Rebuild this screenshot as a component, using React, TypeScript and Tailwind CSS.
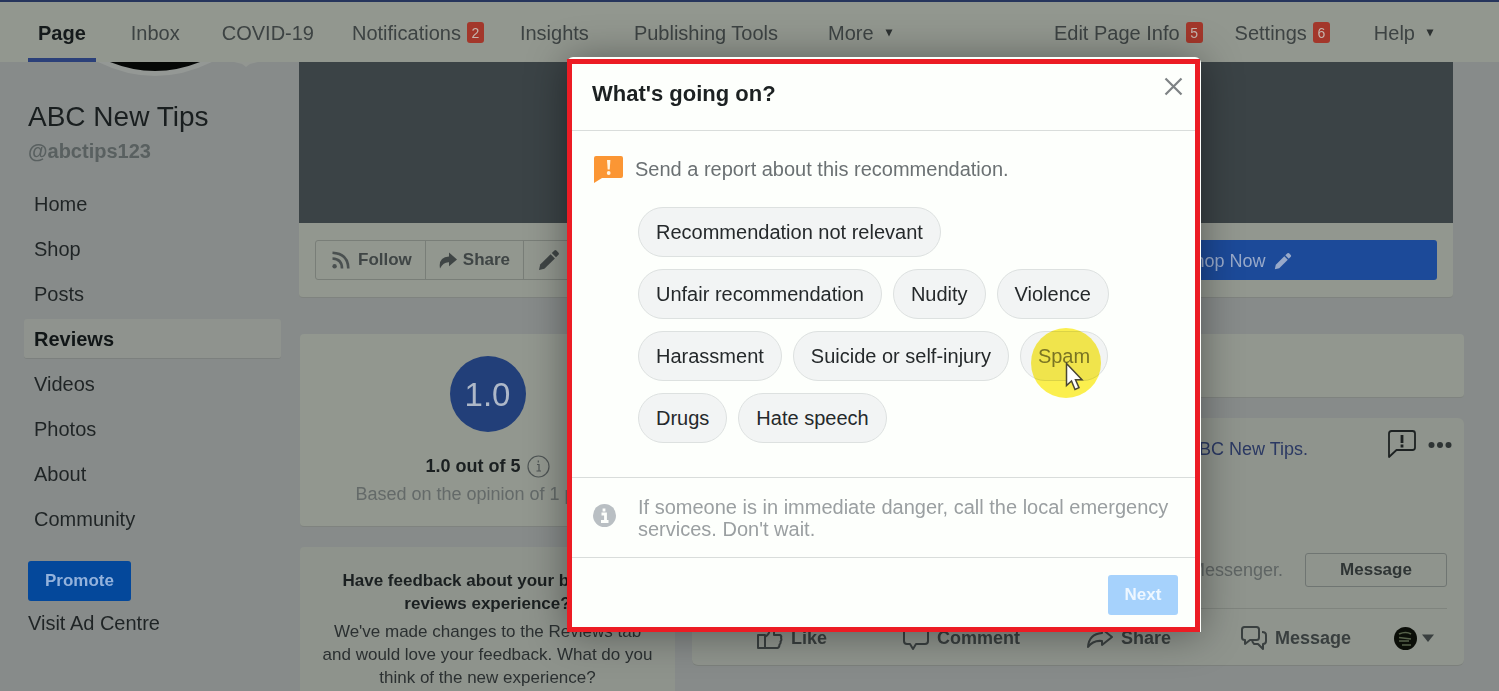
import React from "react";

const font = "font-['Liberation_Sans',Arial,sans-serif]";

function Badge({ children }: { children: React.ReactNode }) {
  return (
    <span className="ml-1.5 flex h-[21px] w-[17px] items-center justify-center rounded-[3px] bg-[#a3372b] text-sm text-[#c4b5ae]">
      {children}
    </span>
  );
}

function Caret() {
  return (
    <svg className="ml-[11px]" width="8" height="8" viewBox="0 0 8 8" aria-hidden="true">
      <path d="M0.5 0.5h7L4 7.5z" fill="#2c3131" />
    </svg>
  );
}

function NavLink({ label, badge, caret, className }: { label: string; badge?: string; caret?: boolean; className: string }) {
  return (
    <a href="#" className={`flex items-center pt-px ${className}`}>
      {label}
      {badge && <Badge>{badge}</Badge>}
      {caret && <Caret />}
    </a>
  );
}

function TopNav() {
  return (
    <header className="flex h-[62px] shrink-0 justify-between border-t-2 border-[#26355c] bg-[#92978f] pr-[65px] pl-7 text-xl whitespace-nowrap text-[#3d4343]">
      <nav className="flex">
        <a href="#" className="flex items-center border-b-4 border-[#2b4079] px-2.5 pt-[5px] font-bold text-[#151a1b]">
          Page
        </a>
        <NavLink label="Inbox" className="ml-[35px]" />
        <NavLink label="COVID-19" className="ml-[42px]" />
        <NavLink label="Notifications" badge="2" className="ml-[38px]" />
        <NavLink label="Insights" className="ml-9" />
        <NavLink label="Publishing Tools" className="ml-[45px]" />
        <NavLink label="More" caret className="ml-[50px]" />
      </nav>
      <nav className="flex">
        <NavLink label="Edit Page Info" badge="5" className="" />
        <NavLink label="Settings" badge="6" className="ml-8" />
        <NavLink label="Help" caret className="ml-11" />
      </nav>
    </header>
  );
}

const pages = ["Home", "Shop", "Posts", "Reviews", "Videos", "Photos", "About", "Community"];

function Sidebar() {
  return (
    <aside className="w-[299px] shrink-0 text-xl text-[#1f2425]">
      <svg className="ml-[95px] block" width="180" height="16" viewBox="0 0 180 16" aria-hidden="true">
        <path d="M3 0Q60 28 117 0z" fill="#949895" />
        <path d="M15 0Q60 18 105 0z" fill="#050706" />
        <path d="M139 0h24l-8 2-4 3-4-3z" fill="#929691" />
      </svg>
      <div className="px-7 pt-5">
        <h1 className="text-[28px] leading-[38px] text-[#191e1f]">ABC New Tips</h1>
        <p className="leading-[30px] font-bold text-[#596060]">@abctips123</p>
      </div>
      <nav className="mt-[18px] mr-[18px] ml-6 flex flex-col gap-[5px]">
        {pages.map((p) => (
          <a
            key={p}
            href="#"
            className={
              p === "Reviews"
                ? "flex h-10 items-center rounded-[3px] border-b border-[#7c807e] bg-[#8f938e] px-2.5 font-bold text-[#111617]"
                : "flex h-10 items-center px-2.5"
            }
          >
            {p}
          </a>
        ))}
      </nav>
      <div className="mt-[22px] flex flex-col items-start pl-7">
        <button type="button" className="h-10 rounded-[3px] bg-[#04489b] px-[17px] text-[17px] font-bold text-[#93b2dc]">
          Promote
        </button>
        <a href="#" className="mt-2 leading-7">
          Visit Ad Centre
        </a>
      </div>
    </aside>
  );
}

function Pencil({ className, size }: { className: string; size: number }) {
  return (
    <svg className={className} width={size} height={size} viewBox="0 0 22 22" fill="currentColor" aria-hidden="true">
      <path d="M1 21l1.2-5.4L12.600 5.200l4.300 4.300L6.400 19.800z" />
      <path d="M13.800 4l2.600-2.500q1-.8 2 .1l2.100 2.100q.9 1 0 2L18 8.300z" />
    </svg>
  );
}

function CoverCard() {
  const cell = "flex items-center border-r border-[#797e78] px-[13px]";
  return (
    <section className="mr-[11px] rounded-b border-b border-[#7f837f] bg-[#92978f]">
      <div className="h-[161px] bg-[#3b4346]" />
      <div className="flex h-[74px] items-center justify-between px-4">
        <div className="flex h-10 rounded-[3px] border border-[#797e78] text-[17px] font-bold text-[#3f4545]">
          <button type="button" className={cell}>
            <svg className="mr-2 ml-[3px]" width="18" height="18" viewBox="0 0 18 18" fill="none" stroke="#4a5050" strokeWidth="2.6" aria-hidden="true">
              <circle cx="2.600" cy="15.200" r="2.200" fill="#4a5050" stroke="none" />
              <path d="M0.500 7.500q9.500.5 9.500 10M.5 1.700q15.500.8 15.800 15.800" />
            </svg>
            Follow
          </button>
          <button type="button" className={cell}>
            <svg className="mr-[6px]" width="18" height="17" viewBox="0 0 18 17" fill="#3f4545" aria-hidden="true">
              <path d="M10 0.500L18 7.500l-8 6.800v-4.100Q4.500 9.800 1 16.500-1 5.500 10 4.600z" />
            </svg>
            Share
          </button>
          <button type="button" className="flex items-center px-[14px]">
            <Pencil className="mr-2" size={22} />
            Suggest Edits
          </button>
        </div>
        <button type="button" className="flex h-10 w-[400px] items-center justify-center rounded-[3px] bg-[#1c4a99] pt-0.5 text-lg text-[#98a9c9]">
          Shop Now
          <Pencil className="ml-2" size={18} />
        </button>
      </div>
    </section>
  );
}

function RatingColumn() {
  return (
    <div className="flex w-[375px] shrink-0 flex-col gap-5">
      <section className="flex h-[193px] flex-col items-center rounded border-b border-[#7f837f] bg-[#92978f] pt-[22px]">
        <div className="flex size-[76px] items-center justify-center rounded-full bg-[#223f79] pt-0.5 text-[33px] text-[#aeb8c8]">1.0</div>
        <p className="mt-5 flex items-center text-lg leading-7 font-bold text-[#1b2021]">
          1.0 out of 5
          <svg className="ml-1.5" width="23" height="23" viewBox="0 0 23 23" fill="none" stroke="#4f5555" strokeWidth="1.200" aria-hidden="true">
            <circle cx="11.500" cy="11.500" r="10.500" />
            <path d="M10 9.500h2v6.500M9.500 16h4.500M11.300 5.500v2" />
          </svg>
        </p>
        <p className="text-lg leading-7 text-[#646a69]">Based on the opinion of 1 person</p>
      </section>
      <section className="h-[260px] rounded bg-[#8e938c] px-5 pt-[22px] text-center text-[17px] text-[#2b3031]">
        <h2 className="leading-[23px] font-bold text-[#1b2021]">
          Have feedback about your business
          <br />
          reviews experience?
        </h2>
        <p className="mt-[5px] leading-[23px]">
          We've made changes to the Reviews tab
          <br />
          and would love your feedback. What do you
          <br />
          think of the new experience?
        </p>
      </section>
    </div>
  );
}

const line = { fill: "none", stroke: "#3a4040", strokeWidth: 2, strokeLinejoin: "round" as const };

function PostCard() {
  return (
    <section className="flex h-[248px] flex-col rounded-md border-b border-[#7c807c] bg-[#8f948d] px-[17px]">
      <div className="flex h-[62px] shrink-0 items-center justify-end text-lg text-[#2b3963]">
        <span>doesn't recommend ABC New Tips.</span>
        <button type="button" aria-label="Report" className="mb-2.5 ml-20">
          <svg width="28" height="28" viewBox="0 0 28 28" fill="none" stroke="#1d2222" strokeWidth="1.800" aria-hidden="true">
            <path d="M3.500 1h21Q27 1 27 3.500v14Q27 20 24.500 20H8.500L1 27V3.500Q1 1 3.500 1z" strokeLinejoin="round" />
            <path d="M14 5v8M14 14.500v3" strokeWidth="2.800" />
          </svg>
        </button>
        <button type="button" aria-label="More options" className="mr-[-5px] mb-2 ml-3">
          <svg width="24" height="8" viewBox="0 0 24 8" fill="#2e3434" aria-hidden="true">
            <circle cx="3.500" cy="4" r="3" />
            <circle cx="12" cy="4" r="3" />
            <circle cx="20.500" cy="4" r="3" />
          </svg>
        </button>
      </div>
      <div className="mt-[73px] flex items-center justify-end gap-[22px] border-b border-[#7f847e] pb-[21px] text-lg text-[#5f6564]">
        <span>Messenger.</span>
        <button type="button" className="h-[34px] w-[142px] rounded-[3px] border border-[#6f7572] text-[17px] font-bold text-[#2f3535]">
          Message
        </button>
      </div>
      <div className="flex h-[57px] items-center pt-0.5 pl-12 text-lg font-bold text-[#393f3f]">
        <button type="button" className="flex items-center gap-2">
          <svg width="26" height="24" viewBox="0 0 26 24" {...line} aria-hidden="true">
            <path d="M1 9h7v13H1zM8 11q5-3 5-9 4-1 4 3v4h6q2 1 1 3 1 2-.5 3.500.5 2-1 3 0 3-2 3.500H8" />
          </svg>
          Like
        </button>
        <button type="button" className="ml-[76px] flex items-center gap-2">
          <svg width="26" height="24" viewBox="0 0 26 24" {...line} aria-hidden="true">
            <path d="M4 2h18q3 0 3 3v10q0 3-3 3h-9l-3 5-3-5H4q-3 0-3-3V5q0-3 3-3z" />
          </svg>
          Comment
        </button>
        <button type="button" className="ml-[67px] flex items-center gap-2">
          <svg width="26" height="22" viewBox="0 0 26 22" {...line} aria-hidden="true">
            <path d="M15 2l10 8-10 8v-4Q6 13 1 20 2 7 15 6z" />
          </svg>
          Share
        </button>
        <button type="button" className="ml-[70px] flex items-center gap-2">
          <svg width="26" height="24" viewBox="0 0 26 24" {...line} aria-hidden="true">
            <path d="M3.500 1h12Q18 1 18 3.500v8Q18 14 15.500 14H9l-5 4v-4Q1 14 1 11.500v-8Q1 1 3.500 1z" />
            <path d="M21 6q4 0 4 3v6q0 3-3 3v5l-5-5h-4l-2-3" />
          </svg>
          Message
        </button>
        <button type="button" aria-label="Choose profile" className="ml-[43px] flex items-center gap-[5px]">
          <svg width="23" height="23" viewBox="0 0 23 23" aria-hidden="true">
            <circle cx="11.500" cy="11.500" r="11.500" fill="#0b0e08" />
            <path d="M5 7q7-3 12 0M5 10.500l12 1.500M5 14h10M8 18h9" stroke="#566149" strokeWidth="1.700" fill="none" />
          </svg>
          <svg width="12" height="8" viewBox="0 0 12 8" aria-hidden="true">
            <path d="M0 .5h12L6 8z" fill="#3a4040" />
          </svg>
        </button>
      </div>
    </section>
  );
}

function Spotlight() {
  return (
    <>
      <span className="pointer-events-none absolute top-[-4px] left-2.5 size-[70px] rounded-full bg-[#fdee3c] opacity-90 mix-blend-multiply" />
      <svg className="pointer-events-none absolute top-[30px] left-11" width="20" height="30" viewBox="0 0 20 30" aria-hidden="true">
        <path d="M1.500 1.500v22l5-4.500 3.500 8.500 4-1.800-3.500-8h6.500z" fill="#fff" stroke="#4a4632" strokeWidth="1.500" />
      </svg>
    </>
  );
}

const reasons = [
  "Recommendation not relevant",
  "Unfair recommendation",
  "Nudity",
  "Violence",
  "Harassment",
  "Suicide or self-injury",
  "Spam",
  "Drugs",
  "Hate speech",
];

function ReportDialog() {
  return (
    <div className="absolute inset-0 flex items-start justify-center pt-[57px] pl-[269px]">
      <div
        role="dialog"
        aria-labelledby="report-title"
        className="w-[634px] rounded-t-md bg-[#fdfffc] pt-0.5 pr-px shadow-[0_2px_40px_rgba(0,0,0,0.4)]"
      >
        <div className="border-[5px] border-[#ec1c24]">
          <div className="flex h-[67px] items-start justify-between border-b border-[#d9dddb] pr-3 pl-5">
            <h2 id="report-title" className="pt-[15px] text-[22px] leading-[30px] font-bold text-[#1c2122]">
              What's going on?
            </h2>
            <button type="button" aria-label="Close" className="mt-[13px]">
              <svg width="19" height="19" viewBox="0 0 19 19" stroke="#7d8284" strokeWidth="2.200" aria-hidden="true">
                <path d="M1.500 1.500l16 16M17.500 1.500l-16 16" />
              </svg>
            </button>
          </div>
          <div className="h-[347px] border-b border-[#d9dddb] pt-6 pl-[22px]">
            <div className="flex h-7 items-center gap-3 text-xl text-[#6b7173]">
              <svg width="29" height="28" viewBox="0 0 29 28" aria-hidden="true">
                <path d="M2 1h25q2 0 2 2v18q0 2-2 2H8l-8 5V3q0-2 2-2z" fill="#fb9634" />
                <path d="M13 5h3.400l-.7 9.500h-2z" fill="#fff4e2" />
                <circle cx="14.700" cy="18" r="1.900" fill="#fff4e2" />
              </svg>
              Send a report about this recommendation.
            </div>
            <div className="mt-6 ml-11 flex max-w-[480px] flex-wrap gap-x-[11px] gap-y-3">
              {reasons.map((r) => (
                <button
                  key={r}
                  type="button"
                  className={`relative h-[50px] rounded-full border border-[#dde1e0] bg-[#f2f4f4] px-[17px] text-xl ${
                    r === "Spam" ? "text-[#7b7c70]" : "text-[#25292b]"
                  }`}
                >
                  {r}
                  {r === "Spam" && <Spotlight />}
                </button>
              ))}
            </div>
          </div>
          <div className="flex h-20 items-center gap-[22px] border-b border-[#d9dddb] pr-5 pl-[21px] text-xl leading-[22px] text-[#9a9fa1]">
            <svg className="mb-1 shrink-0" width="23" height="23" viewBox="0 0 23 23" aria-hidden="true">
              <circle cx="11.500" cy="11.500" r="11.500" fill="#b9bfc3" />
              <path d="M8.500 10h4v7M8 17.500h7.500M11 4.500v3" stroke="#fdfffc" strokeWidth="2.800" fill="none" />
            </svg>
            <p>If someone is in immediate danger, call the local emergency services. Don't wait.</p>
          </div>
          <div className="flex h-[69px] items-center justify-end pt-1 pr-[17px]">
            <button type="button" className="h-10 w-[70px] rounded-[3px] bg-[#a6d2fc] text-[17px] font-bold text-[#eef7ff]">
              Next
            </button>
          </div>
        </div>
      </div>
    </div>
  );
}

export default function App() {
  return (
    <div className={`relative flex h-screen flex-col overflow-hidden bg-[#878b8a] ${font}`}>
      <TopNav />
      <div className="flex min-h-0 flex-1">
        <Sidebar />
        <main className="mr-[35px] min-w-0 flex-1">
          <CoverCard />
          <div className="mt-9 ml-px flex gap-[17px]">
            <RatingColumn />
            <div className="flex min-w-0 flex-1 flex-col gap-5">
              <section className="h-16 rounded border-b border-[#7f837f] bg-[#92978f]" />
              <PostCard />
            </div>
          </div>
        </main>
      </div>
      <ReportDialog />
    </div>
  );
}
